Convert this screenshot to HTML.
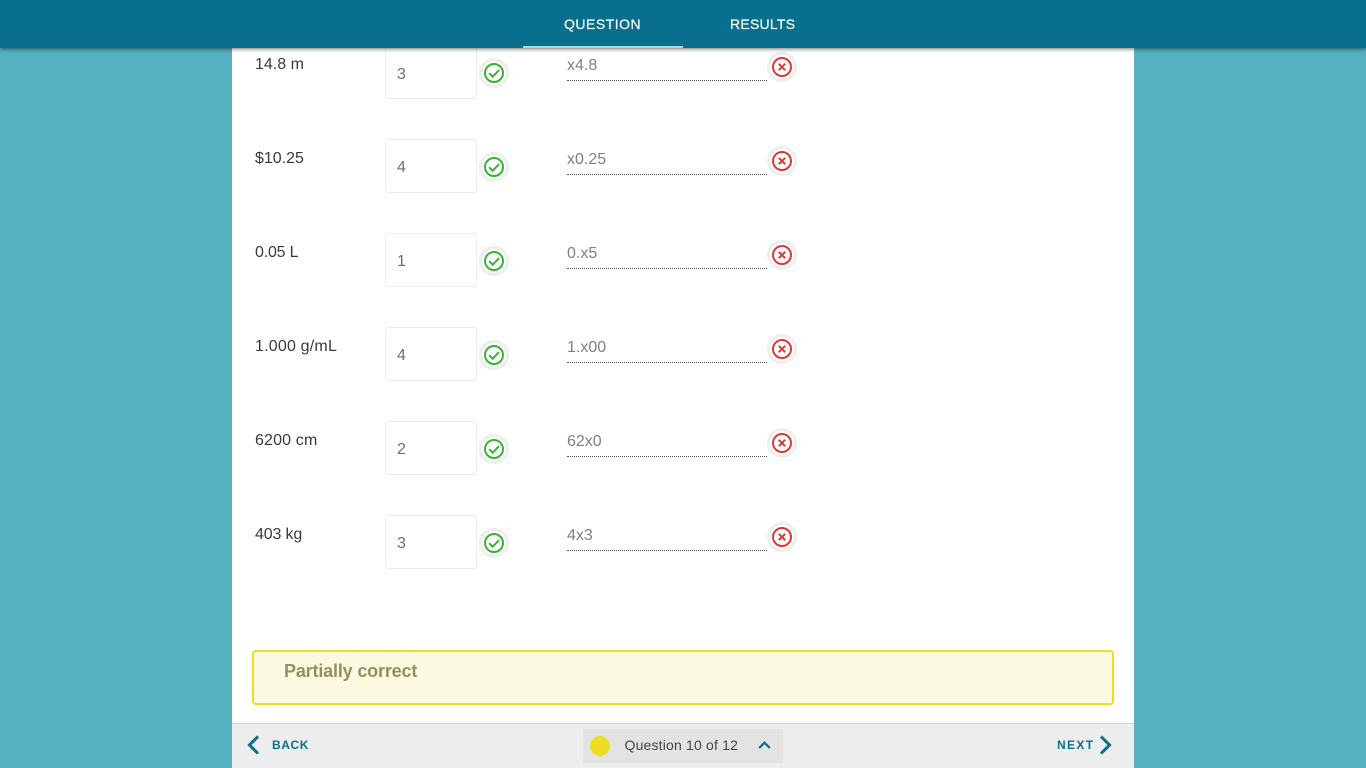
<!DOCTYPE html>
<html><head><meta charset="utf-8"><style>
*{box-sizing:border-box}
html,body{margin:0;padding:0;width:1366px;height:768px;overflow:hidden;background:#55b1c0;font-family:"Liberation Sans",sans-serif}
.a{position:absolute}
#main{left:232px;top:0;width:902px;height:768px;background:#fff}
#hdr{left:0;top:0;width:1366px;height:48px;background:#086f8d;box-shadow:0 1px 4px rgba(0,0,0,.55);z-index:5}
.tab{top:16px;font-size:14px;line-height:16px;color:#f2f8fa;white-space:nowrap;font-weight:400;-webkit-text-stroke:.25px #f2f8fa}
#ul{left:523px;top:46px;width:160px;height:2px;background:#a6d8e8}
.lbl{left:255px;font-size:16px;line-height:18px;color:#3a3a3a;white-space:nowrap}
.box{left:385px;width:92px;height:54px;border:1px solid #ececec;border-radius:3px;background:#fff;color:#6f6f6f;font-size:16px;line-height:18px;padding:19px 0 0 11px}
.ans{left:567px;width:200px;height:25px;border-bottom:1px dotted #555;font-size:16px;line-height:18px;color:#808080;letter-spacing:0;padding-top:1px}
.ic{width:30px;height:30px}
#fb{left:252px;top:650px;width:862px;height:55px;background:#fbf9e0;border:2px solid #eedd22;border-radius:4px}
#fbt{left:284px;top:661px;font-size:18px;line-height:21px;font-weight:700;color:#94905c;letter-spacing:-.17px;white-space:nowrap}
#bar{left:232px;top:723px;width:902px;height:45px;background:#ededed;border-top:1px solid #d2d2cf}
#pill{left:583px;top:729px;width:200px;height:34px;background:#e3e3e3}
#dot{left:590px;top:736px;width:20px;height:20px;border-radius:50%;background:#eedd22}
#q{left:624.5px;top:737px;font-size:14px;line-height:17px;color:#444;white-space:nowrap;letter-spacing:.18px}
.nav{top:738px;font-size:12px;line-height:15px;font-weight:700;color:#086f8d;letter-spacing:1.35px;white-space:nowrap}
</style></head><body>
<div class="a" id="main"></div>

<div class="a lbl" style="top:56px">14.8 m</div>
<div class="a box" style="top:45px;padding-top:20px">3</div>
<div class="a ans" style="top:56px">x4.8</div>
<svg class="a ic" style="left:479px;top:58px" viewBox="0 0 30 30"><circle cx="15" cy="15" r="13.500" fill="#fff" stroke="#eee" stroke-width="3"/><circle cx="15" cy="15" r="9" fill="none" stroke="#34b52f" stroke-width="2"/><path d="M10.200 15.200l3.500 3.500 6.300-6.500" fill="none" stroke="#34b52f" stroke-width="2"/></svg>
<svg class="a ic" style="left:767px;top:52px" viewBox="0 0 30 30"><circle cx="15" cy="15" r="13.500" fill="#fff" stroke="#eee" stroke-width="3"/><circle cx="15" cy="15" r="9" fill="none" stroke="#db3a34" stroke-width="2"/><path d="M11.800 11.800l6.400 6.400M18.200 11.800l-6.400 6.400" fill="none" stroke="#db3a34" stroke-width="2"/></svg>

<div class="a lbl" style="top:150px">$10.25</div>
<div class="a box" style="top:139px">4</div>
<div class="a ans" style="top:150px">x0.25</div>
<svg class="a ic" style="left:479px;top:152px" viewBox="0 0 30 30"><circle cx="15" cy="15" r="13.500" fill="#fff" stroke="#eee" stroke-width="3"/><circle cx="15" cy="15" r="9" fill="none" stroke="#34b52f" stroke-width="2"/><path d="M10.200 15.200l3.500 3.500 6.300-6.500" fill="none" stroke="#34b52f" stroke-width="2"/></svg>
<svg class="a ic" style="left:767px;top:146px" viewBox="0 0 30 30"><circle cx="15" cy="15" r="13.500" fill="#fff" stroke="#eee" stroke-width="3"/><circle cx="15" cy="15" r="9" fill="none" stroke="#db3a34" stroke-width="2"/><path d="M11.800 11.800l6.400 6.400M18.200 11.800l-6.400 6.400" fill="none" stroke="#db3a34" stroke-width="2"/></svg>

<div class="a lbl" style="top:244px;letter-spacing:-.2px">0.05 L</div>
<div class="a box" style="top:233px">1</div>
<div class="a ans" style="top:244px">0.x5</div>
<svg class="a ic" style="left:479px;top:246px" viewBox="0 0 30 30"><circle cx="15" cy="15" r="13.500" fill="#fff" stroke="#eee" stroke-width="3"/><circle cx="15" cy="15" r="9" fill="none" stroke="#34b52f" stroke-width="2"/><path d="M10.200 15.200l3.500 3.500 6.300-6.500" fill="none" stroke="#34b52f" stroke-width="2"/></svg>
<svg class="a ic" style="left:767px;top:240px" viewBox="0 0 30 30"><circle cx="15" cy="15" r="13.500" fill="#fff" stroke="#eee" stroke-width="3"/><circle cx="15" cy="15" r="9" fill="none" stroke="#db3a34" stroke-width="2"/><path d="M11.800 11.800l6.400 6.400M18.200 11.800l-6.400 6.400" fill="none" stroke="#db3a34" stroke-width="2"/></svg>

<div class="a lbl" style="top:338px;letter-spacing:.2px">1.000 g/mL</div>
<div class="a box" style="top:327px">4</div>
<div class="a ans" style="top:338px">1.x00</div>
<svg class="a ic" style="left:479px;top:340px" viewBox="0 0 30 30"><circle cx="15" cy="15" r="13.500" fill="#fff" stroke="#eee" stroke-width="3"/><circle cx="15" cy="15" r="9" fill="none" stroke="#34b52f" stroke-width="2"/><path d="M10.200 15.200l3.500 3.500 6.300-6.500" fill="none" stroke="#34b52f" stroke-width="2"/></svg>
<svg class="a ic" style="left:767px;top:334px" viewBox="0 0 30 30"><circle cx="15" cy="15" r="13.500" fill="#fff" stroke="#eee" stroke-width="3"/><circle cx="15" cy="15" r="9" fill="none" stroke="#db3a34" stroke-width="2"/><path d="M11.800 11.800l6.400 6.400M18.200 11.800l-6.400 6.400" fill="none" stroke="#db3a34" stroke-width="2"/></svg>

<div class="a lbl" style="top:432px;letter-spacing:.15px">6200 cm</div>
<div class="a box" style="top:421px">2</div>
<div class="a ans" style="top:432px">62x0</div>
<svg class="a ic" style="left:479px;top:434px" viewBox="0 0 30 30"><circle cx="15" cy="15" r="13.500" fill="#fff" stroke="#eee" stroke-width="3"/><circle cx="15" cy="15" r="9" fill="none" stroke="#34b52f" stroke-width="2"/><path d="M10.200 15.200l3.500 3.500 6.300-6.500" fill="none" stroke="#34b52f" stroke-width="2"/></svg>
<svg class="a ic" style="left:767px;top:428px" viewBox="0 0 30 30"><circle cx="15" cy="15" r="13.500" fill="#fff" stroke="#eee" stroke-width="3"/><circle cx="15" cy="15" r="9" fill="none" stroke="#db3a34" stroke-width="2"/><path d="M11.800 11.800l6.400 6.400M18.200 11.800l-6.400 6.400" fill="none" stroke="#db3a34" stroke-width="2"/></svg>

<div class="a lbl" style="top:526px;letter-spacing:-.15px">403 kg</div>
<div class="a box" style="top:515px">3</div>
<div class="a ans" style="top:526px">4x3</div>
<svg class="a ic" style="left:479px;top:528px" viewBox="0 0 30 30"><circle cx="15" cy="15" r="13.500" fill="#fff" stroke="#eee" stroke-width="3"/><circle cx="15" cy="15" r="9" fill="none" stroke="#34b52f" stroke-width="2"/><path d="M10.200 15.200l3.500 3.500 6.300-6.500" fill="none" stroke="#34b52f" stroke-width="2"/></svg>
<svg class="a ic" style="left:767px;top:522px" viewBox="0 0 30 30"><circle cx="15" cy="15" r="13.500" fill="#fff" stroke="#eee" stroke-width="3"/><circle cx="15" cy="15" r="9" fill="none" stroke="#db3a34" stroke-width="2"/><path d="M11.800 11.800l6.400 6.400M18.200 11.800l-6.400 6.400" fill="none" stroke="#db3a34" stroke-width="2"/></svg>

<div class="a" id="fb"></div>
<div class="a" id="fbt">Partially correct</div>

<div class="a" id="bar"></div>
<svg class="a" style="left:245px;top:734px" width="16" height="22" viewBox="0 0 16 22"><path d="M13 2.500L4.500 11l8.500 8.500" fill="none" stroke="#086f8d" stroke-width="3"/></svg>
<div class="a nav" style="left:272px;letter-spacing:.6px">BACK</div>
<div class="a" id="pill"></div>
<div class="a" id="dot"></div>
<div class="a" id="q">Question 10 of 12</div>
<svg class="a" style="left:756px;top:738px" width="17" height="14" viewBox="0 0 17 14"><path d="M3.200 10L8.500 4.700 13.800 10" fill="none" stroke="#086f8d" stroke-width="2.200"/></svg>
<div class="a nav" style="left:1057px">NEXT</div>
<svg class="a" style="left:1098px;top:734px" width="17" height="22" viewBox="0 0 17 22"><path d="M3 2.500L11.500 11 3 19.500" fill="none" stroke="#086f8d" stroke-width="3"/></svg>

<div class="a" id="hdr">
<div class="a tab" style="left:564px;letter-spacing:.5px">QUESTION</div>
<div class="a tab" style="left:730px;letter-spacing:.25px">RESULTS</div>
<div class="a" id="ul"></div>
</div>
</body></html>
